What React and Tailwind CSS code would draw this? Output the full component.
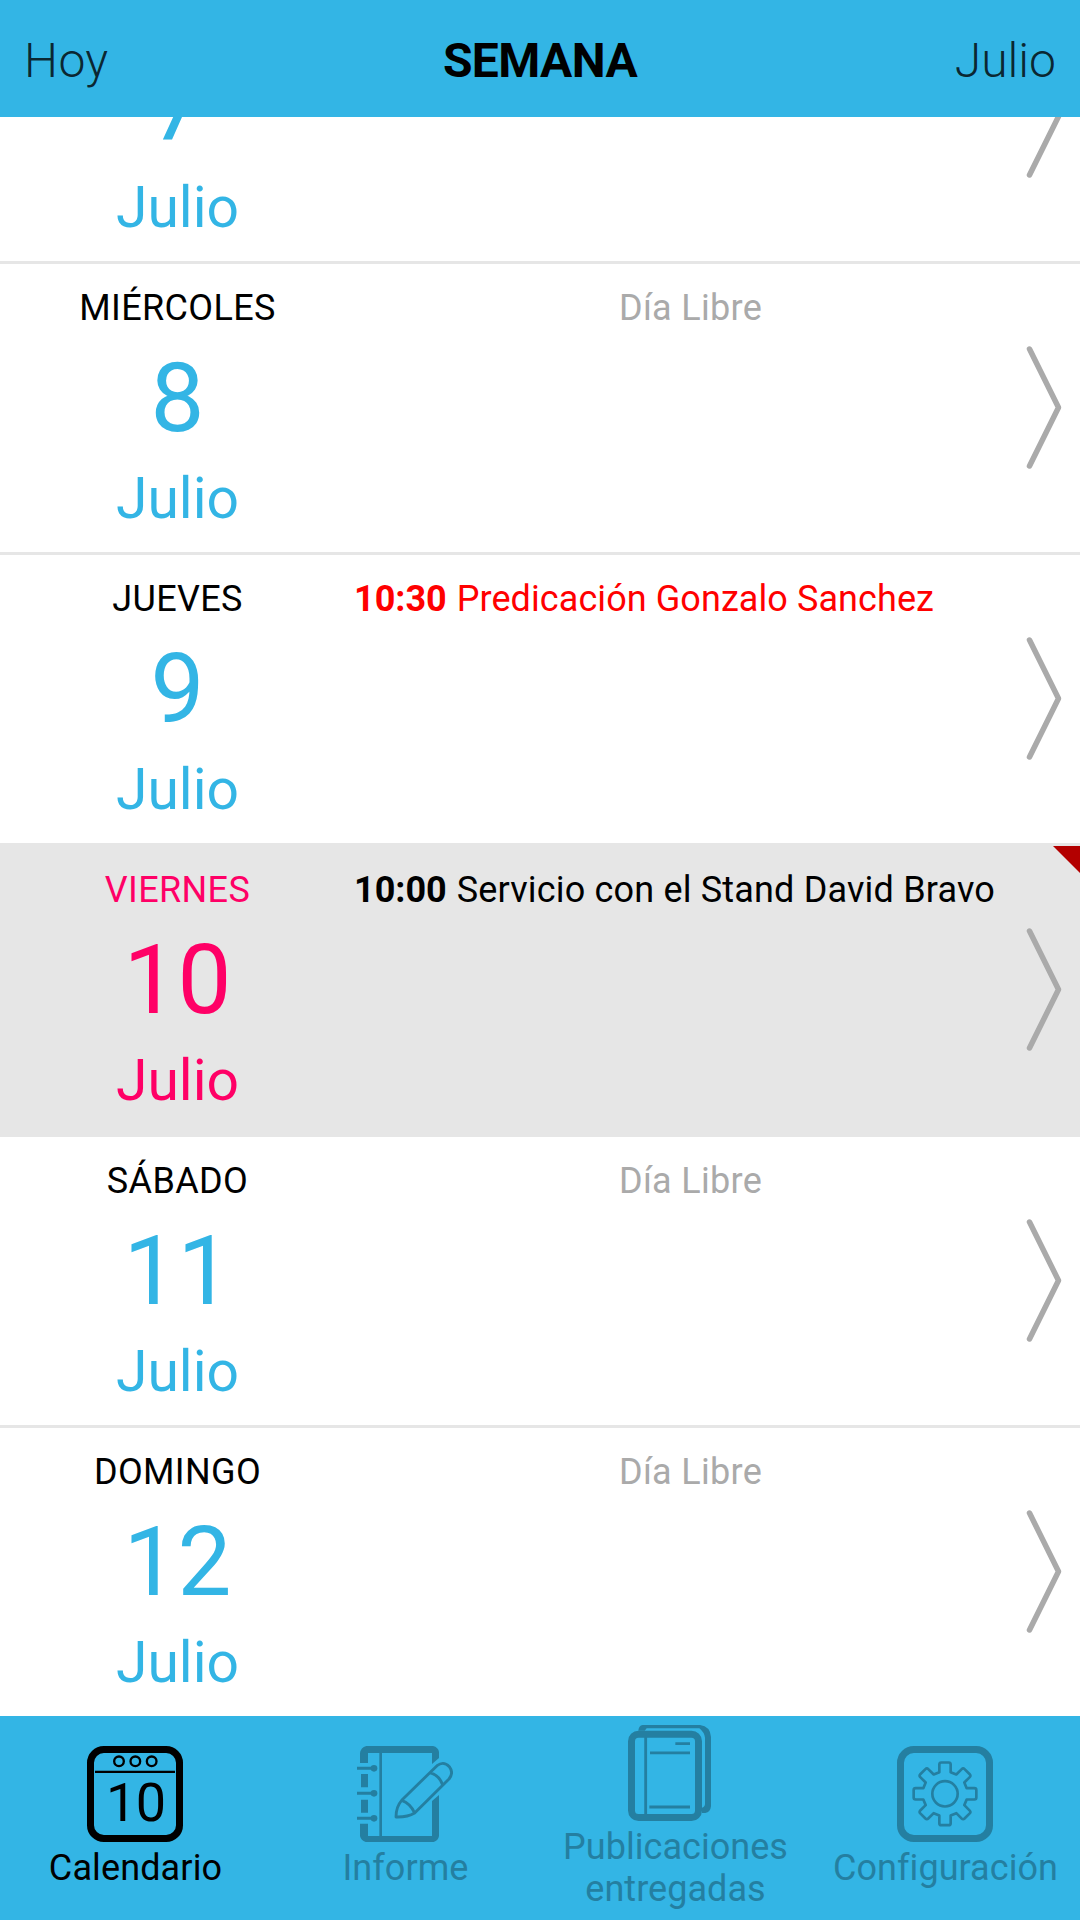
import React from 'react';

const DAYS = [
  { num: '7' },
  { name: 'MIÉRCOLES', num: '8' },
  { name: 'JUEVES', num: '9', time: '10:30', text: 'Predicación Gonzalo Sanchez', red: true },
  { name: 'VIERNES', num: '10', time: '10:00', text: 'Servicio con el Stand David Bravo', today: true },
  { name: 'SÁBADO', num: '11' },
  { name: 'DOMINGO', num: '12' },
];

function Chevron() {
  return (
    <svg className="mt-[79px] h-[128px] w-[38px]" viewBox="0 0 38 128" fill="none" stroke="#aaaaaa" strokeWidth="5.5" strokeLinecap="round" strokeLinejoin="round">
      <path d="M5.5 6 L34.5 64.5 L5.5 123" />
    </svg>
  );
}

function DayRow({ day }) {
  const accent = day.today ? 'text-[#ff0066]' : 'text-[#33b5e5]';
  return (
    <div className={`relative flex h-[291px] shrink-0 border-t-[3px] border-[#e6e6e6] ${day.today ? 'bg-[#e6e6e6]' : 'bg-white'}`}>
      <div className={`flex w-[354px] flex-col items-center pt-[23px] ${accent}`}>
        <div className={`h-[42px] pl-px text-[36px] leading-[42px] tracking-[0.35px] ${day.today ? '' : 'text-black'}`}>{day.name}</div>
        <div className="mt-[13px] pl-px text-[96px] leading-[112px]">{day.num}</div>
        <div className="mt-[11px] pl-px text-[57px] leading-[67px]">Julio</div>
      </div>
      <div className={`w-[670px] whitespace-nowrap pt-[23px] text-[36px] leading-[42px] ${day.red ? 'text-[#ff0000]' : 'text-black'}`}>
        {day.time && (
          <div>
            <span className="mr-px font-bold">{day.time}</span>{' '}
            <span className={day.red ? 'tracking-[0.08px]' : 'tracking-[0.18px]'}>{day.text}</span>
          </div>
        )}
        {!day.time && day.name && (
          <div className="pl-[3px] text-center tracking-[0.3px] text-[#aaaaaa]">Día Libre</div>
        )}
      </div>
      <Chevron />
      {day.today && (
        <svg className="absolute right-0 top-0 size-[27px]" viewBox="0 0 27 27">
          <path d="M0 0 H27 V27 Z" fill="#b30000" />
        </svg>
      )}
    </div>
  );
}

function CalendarIcon() {
  return (
    <svg className="size-24" viewBox="0 0 288 288" fill="none" stroke="currentColor">
      <rect x="10.5" y="10.5" width="267" height="267" rx="40" strokeWidth="21" />
      <g strokeWidth="7">
        <circle cx="96" cy="46" r="14.5" />
        <circle cx="145" cy="46" r="14.5" />
        <circle cx="194" cy="46" r="14.5" />
        <path d="M24 77.5 H264" />
      </g>
      <text x="147" y="225" textAnchor="middle" fontFamily="Roboto, sans-serif" fontSize="162" fill="currentColor" stroke="none" textLength="180">10</text>
    </svg>
  );
}

function ReportIcon() {
  return (
    <svg className="size-24" viewBox="0 0 288 288" fill="none" stroke="currentColor">
      <g fill="currentColor" stroke="none">
        <path d="M9 51 V22 Q11 4 28 0 H228 Q244 4 246 18 V36 L225 54 V21 H33 V51 Z" />
        <path d="M9 233 H33 V270 H225 V165 L246 147 V270 Q244 284 230 288 H26 Q12 284 9 270 Z" />
        <path d="M12 84 H33 V124 H12 Z M12 161 H33 V200 H12 Z" />
        <circle cx="51" cy="67" r="10" />
        <circle cx="51" cy="142" r="10" />
        <circle cx="51" cy="217" r="10" />
      </g>
      <path strokeWidth="9" d="M0 67 H50 M0 142 H50 M0 217 H50" />
      <path strokeWidth="8" d="M71 21 V270" />
      <path strokeWidth="8.5" strokeLinejoin="round" d="M117 213 Q117 182 134 163 L240 59 Q260 44 277 62 Q291 81 276 99 L173 201 Q152 214 117 213 Z M134 163 Q160 172 173 201 M218 80 Q247 87 257 117" />
    </svg>
  );
}

function BooksIcon() {
  return (
    <svg className="ml-0.5 size-24" viewBox="0 0 288 288" fill="none" stroke="currentColor">
      <path fill="currentColor" stroke="none" d="M31 17 Q32 2 44 0 H216 Q247 4 249 36 V244 Q247 262 232 264 H222 V248 Q230 247 231 238 V38 Q229 22 214 10 H56 L50 17 Z" />
      <rect x="10.5" y="27.5" width="201" height="250" rx="21" strokeWidth="21" />
      <path strokeWidth="8.5" d="M53 36 V270 M142 56 H186 M66 83.5 H186 M64 246 H186" />
    </svg>
  );
}

// One tooth, drawn upwards from the gear's centre, repeated every 45 degrees.
const TOOTH = [['L', -17, -65], ['L', -17, -88], ['Q', -17, -94], ['', -11, -94], ['L', 11, -94], ['Q', 17, -94], ['', 17, -88], ['L', 17, -65]];
const GEAR = [0, 1, 2, 3, 4, 5, 6, 7]
  .map((i) => {
    const a = (i * Math.PI) / 4;
    return TOOTH.map(([cmd, x, y]) => `${cmd}${(144 + x * Math.cos(a) - y * Math.sin(a)).toFixed(1)} ${(143.5 + x * Math.sin(a) + y * Math.cos(a)).toFixed(1)}`).join(' ');
  })
  .join(' ')
  .replace('L', 'M');

function SettingsIcon() {
  return (
    <svg className="size-24" viewBox="0 0 288 288" fill="none" stroke="currentColor">
      <rect x="10.5" y="10.5" width="267" height="267" rx="40" strokeWidth="21" />
      <path d={`${GEAR} Z`} strokeWidth="8" strokeLinejoin="round" />
      <circle cx="144" cy="143.5" r="38" strokeWidth="8" />
    </svg>
  );
}

function Tab({ icon, active, children }) {
  return (
    <div className={`flex w-[270px] flex-col items-center justify-center pb-px ${active ? 'text-black' : 'text-[#247fa1]'}`}>
      {icon}
      <div className="mt-[5px] pl-px text-center text-[36px] leading-[42px] tracking-[0.05px]">{children}</div>
    </div>
  );
}

export default function App() {
  return (
    <div className="flex h-[1920px] w-[1080px] flex-col overflow-hidden bg-white font-[Roboto,sans-serif]">
      <header className="z-10 grid h-[117px] shrink-0 grid-cols-3 bg-[#33b5e5] px-6 pt-8 text-[48px] leading-[57px] text-black">
        <div className="font-light tracking-[0.4px] text-black/80">Hoy</div>
        <div className="text-center font-bold tracking-[-0.6px]">SEMANA</div>
        <div className="text-right font-light text-black/80">Julio</div>
      </header>
      <main className="flex h-[1599px] shrink-0 flex-col justify-end overflow-hidden">
        {DAYS.map((day) => (
          <DayRow key={day.num} day={day} />
        ))}
      </main>
      <footer className="flex h-[204px] shrink-0 bg-[#33b5e5]">
        <Tab icon={<CalendarIcon />} active><span className="tracking-[0.12px]">Calendario</span></Tab>
        <Tab icon={<ReportIcon />}>Informe</Tab>
        <Tab icon={<BooksIcon />}>Publicaciones<br />entregadas</Tab>
        <Tab icon={<SettingsIcon />}>Configuración</Tab>
      </footer>
    </div>
  );
}
